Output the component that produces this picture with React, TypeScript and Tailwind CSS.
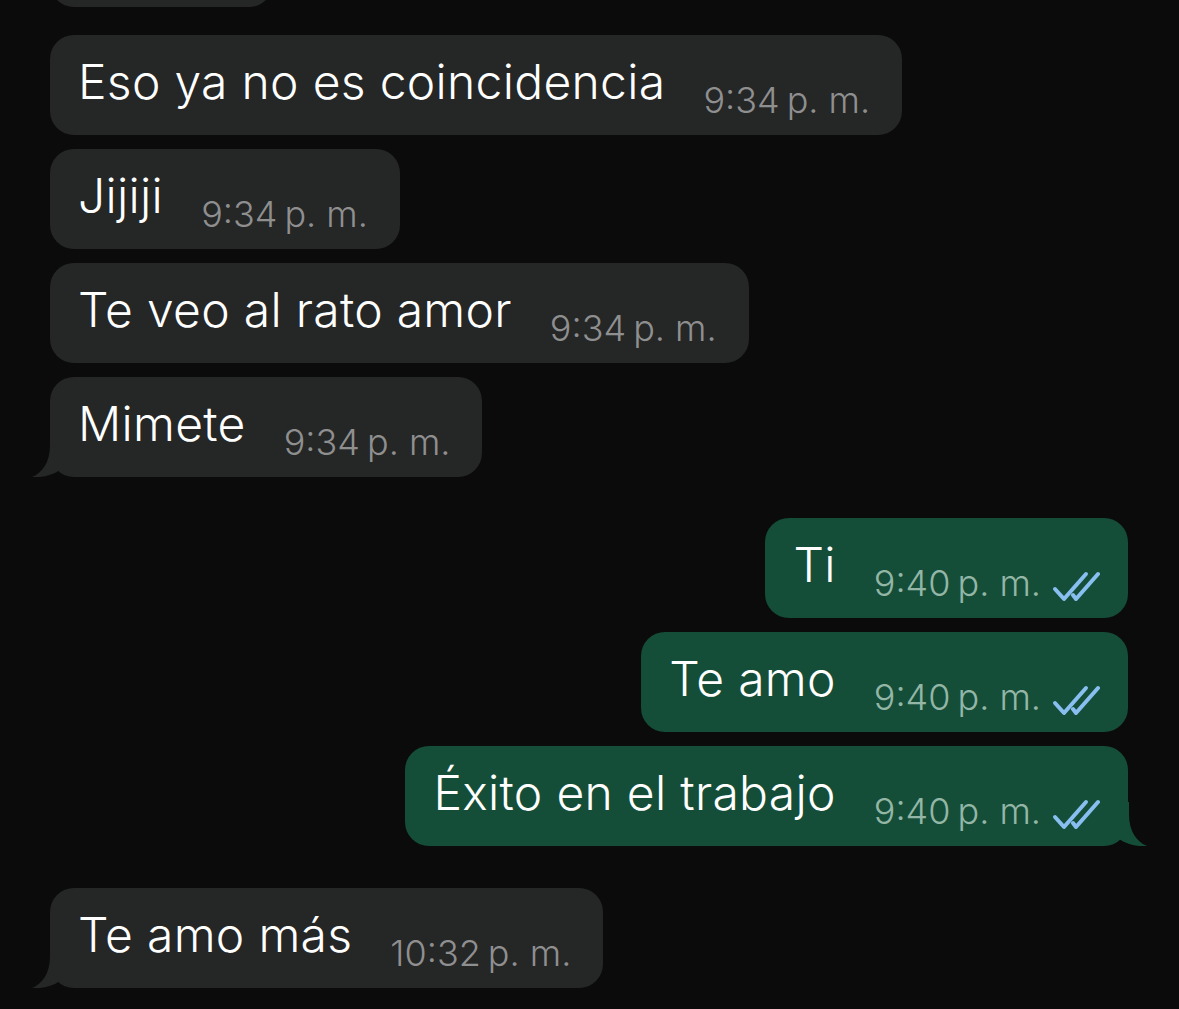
import React from 'react';

type Msg = {
  text: string;
  time: string;
  out?: boolean;
  tail?: boolean;
  gap: string;
};

const messages: Msg[] = [
  { text: 'Eso ya no es coincidencia', time: '9:34', gap: 'mt-[28px]' },
  { text: 'Jijiji', time: '9:34', gap: 'mt-[14px]' },
  { text: 'Te veo al rato amor', time: '9:34', gap: 'mt-[14px]' },
  { text: 'Mimete', time: '9:34', tail: true, gap: 'mt-[14px]' },
  { text: 'Ti', time: '9:40', out: true, gap: 'mt-[41px]' },
  { text: 'Te amo', time: '9:40', out: true, gap: 'mt-[14px]' },
  { text: 'Éxito en el trabajo', time: '9:40', out: true, tail: true, gap: 'mt-[14px]' },
  { text: 'Te amo más', time: '10:32', tail: true, gap: 'mt-[42px]' },
];

function ReadTicks() {
  return (
    <svg width="48" height="32" viewBox="0 0 48 32" className="ml-[11px] mt-[52px] shrink-0" fill="none">
      <path d="M3 19 L12 29 L34 4" stroke="#88bff0" strokeWidth="4" strokeLinecap="round" strokeLinejoin="round" />
      <path d="M21 25 L24 29 L46 4" stroke="#88bff0" strokeWidth="4" strokeLinecap="round" strokeLinejoin="round" />
    </svg>
  );
}

// little horn under the last bubble of a group
function Tail({ out }: { out?: boolean }) {
  const fill = out ? '#154e38' : '#252626';
  if (out) {
    return (
      <svg width="44" height="44" viewBox="0 0 44 44" className="absolute bottom-0 right-[-19px]">
        <path d="M0 0 L26 0 L26 12 C26 30 34 40 44 44 C34 44.8 24 42.5 16 37 C12 40 8 42 0 42 Z" fill={fill} />
      </svg>
    );
  }
  return (
    <svg width="44" height="44" viewBox="0 0 44 44" className="absolute bottom-0 left-[-18px]">
      <path d="M44 0 L18 0 L18 12 C18 30 10 40 0 44 C10 44.8 20 42.5 28 37 C32 40 36 42 44 42 Z" fill={fill} />
    </svg>
  );
}

function Bubble({ m }: { m: Msg }) {
  return (
    <div className={`flex ${m.out ? 'justify-end' : 'justify-start'} ${m.gap}`}>
      <div
        className={`relative flex h-[100px] items-start rounded-[24px] pl-[28px] ${
          m.out ? 'bg-[#154e38] pr-[28px]' : 'bg-[#252626] pr-[32px]'
        }`}
      >
        {m.tail && <Tail out={m.out} />}
        <span className="relative mt-[23px] whitespace-nowrap text-[48px] font-[350] leading-[48px] tracking-[0.3px] text-white">
          {m.text}
        </span>
        <span
          className={`relative ml-[38px] mt-[47px] whitespace-nowrap text-[36px] font-[350] leading-[36px] ${
            m.out ? 'text-[#93b6a6]' : 'text-[#8f8f90]'
          }`}
        >
          {m.time}
          <span className="ml-[7px]">p. m.</span>
        </span>
        {m.out && <ReadTicks />}
      </div>
    </div>
  );
}

export default function App() {
  return (
    <div
      className="h-[1009px] w-full overflow-hidden bg-[#0b0b0b] pl-[50px] pr-[51px]"
      style={{ fontFamily: 'Inter, "Noto Sans", sans-serif' }}
    >
      {/* cut-off bubble at the top */}
      <div className="mt-[-93px] h-[100px] w-[223px] rounded-[24px] bg-[#252626]" />
      {messages.map((m, i) => (
        <Bubble key={i} m={m} />
      ))}
    </div>
  );
}
